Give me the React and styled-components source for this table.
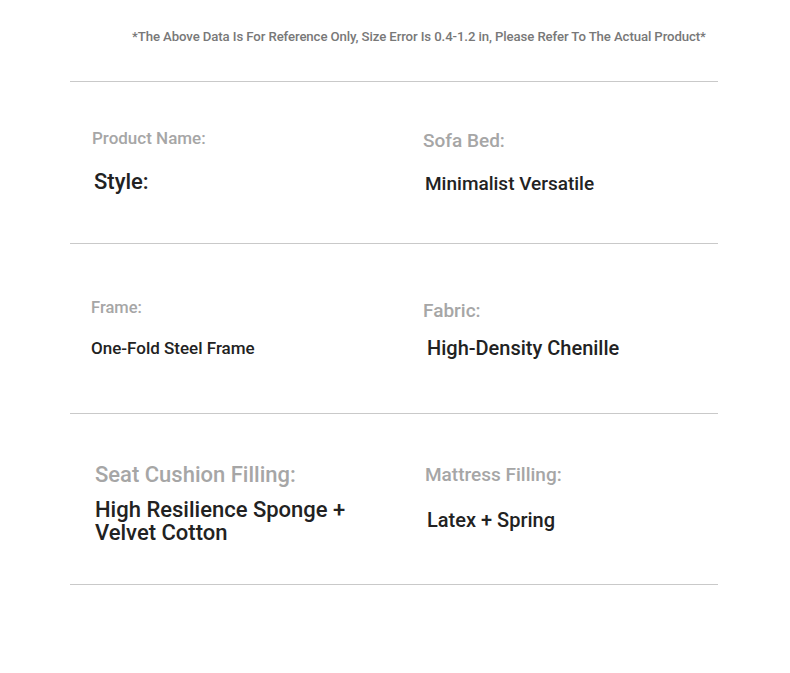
import React from "react";
import styled, { createGlobalStyle } from "styled-components";

const GlobalStyle = createGlobalStyle`
  html, body {
    margin: 0;
    padding: 0;
    background: #ffffff;
    font-family: Roboto, "Liberation Sans", Arial, sans-serif;
  }
`;

const rows = [
  {
    height: 162,
    cells: [
      {
        label: "Product Name:",
        value: "Style:",
        labelSize: 17,
        valueSize: 22,
        padTop: 46,
        gap: 21,
        labelIndent: 22,
        valueIndent: 24,
      },
      {
        label: "Sofa Bed:",
        value: "Minimalist Versatile",
        labelSize: 19,
        valueSize: 19,
        padTop: 47,
        gap: 21,
        labelIndent: 29,
        valueIndent: 31,
      },
    ],
  },
  {
    height: 170,
    cells: [
      {
        label: "Frame:",
        value: "One-Fold Steel Frame",
        labelSize: 16.5,
        valueSize: 17,
        padTop: 54,
        gap: 20,
        labelIndent: 21,
        valueIndent: 21,
      },
      {
        label: "Fabric:",
        value: "High-Density Chenille",
        labelSize: 19,
        valueSize: 20,
        padTop: 55,
        gap: 15,
        labelIndent: 29,
        valueIndent: 33,
      },
    ],
  },
  {
    height: 171,
    cells: [
      {
        label: "Seat Cushion Filling:",
        value: "High Resilience Sponge + Velvet Cotton",
        labelSize: 22,
        valueSize: 22,
        valueLine: 23,
        padTop: 48,
        gap: 10,
        labelIndent: 25,
        valueIndent: 25,
        valueWidth: 285,
      },
      {
        label: "Mattress Filling:",
        value: "Latex + Spring",
        labelSize: 19,
        valueSize: 20,
        padTop: 49,
        gap: 23,
        labelIndent: 31,
        valueIndent: 33,
      },
    ],
  },
];

export default function App() {
  return (
    <Page>
      <GlobalStyle />
      <Note>
        *The Above Data Is For Reference Only, Size Error Is 0.4-1.2 in, Please
        Refer To The Actual Product*
      </Note>
      <Table>
        {rows.map((row, i) => (
          <Row key={i} $height={row.height}>
            {row.cells.map((cell, j) => (
              <Cell key={j} $padTop={cell.padTop} $gap={cell.gap}>
                <Label $size={cell.labelSize} $indent={cell.labelIndent}>
                  {cell.label}
                </Label>
                <Value
                  $size={cell.valueSize}
                  $line={cell.valueLine}
                  $indent={cell.valueIndent}
                  $width={cell.valueWidth}
                >
                  {cell.value}
                </Value>
              </Cell>
            ))}
          </Row>
        ))}
      </Table>
    </Page>
  );
}

const Page = styled.div`
  width: 790px;
  min-height: 673px;
  box-sizing: border-box;
  padding: 28px 72px 0 70px;
`;

const Note = styled.div`
  font-size: 13.2px;
  line-height: 18px;
  font-weight: 500;
  color: #787878;
  padding-left: 62px;
  text-align: left;
  letter-spacing: -0.1px;
  white-space: nowrap;
  padding-bottom: 35px;
  border-bottom: 1px solid #c9c9c9;
`;

const Table = styled.div`
  display: flex;
  flex-direction: column;
`;

const Row = styled.div`
  display: grid;
  grid-template-columns: 324px 324px;
  height: ${(p) => p.$height}px;
  box-sizing: border-box;
  border-bottom: 1px solid #c9c9c9;
`;

const Cell = styled.div`
  display: flex;
  flex-direction: column;
  align-items: flex-start;
  padding-top: ${(p) => p.$padTop}px;
  gap: ${(p) => p.$gap}px;
`;

const Label = styled.div`
  margin-left: ${(p) => p.$indent}px;
  font-size: ${(p) => p.$size}px;
  line-height: ${(p) => Math.round(p.$size * 1.2)}px;
  font-weight: 500;
  color: #a6a6a6;
`;

const Value = styled.div`
  margin-left: ${(p) => p.$indent}px;
  width: ${(p) => (p.$width ? `${p.$width}px` : "auto")};
  font-size: ${(p) => p.$size}px;
  line-height: ${(p) => (p.$line ? p.$line : Math.round(p.$size * 1.15))}px;
  font-weight: 500;
  color: #222222;
`;
